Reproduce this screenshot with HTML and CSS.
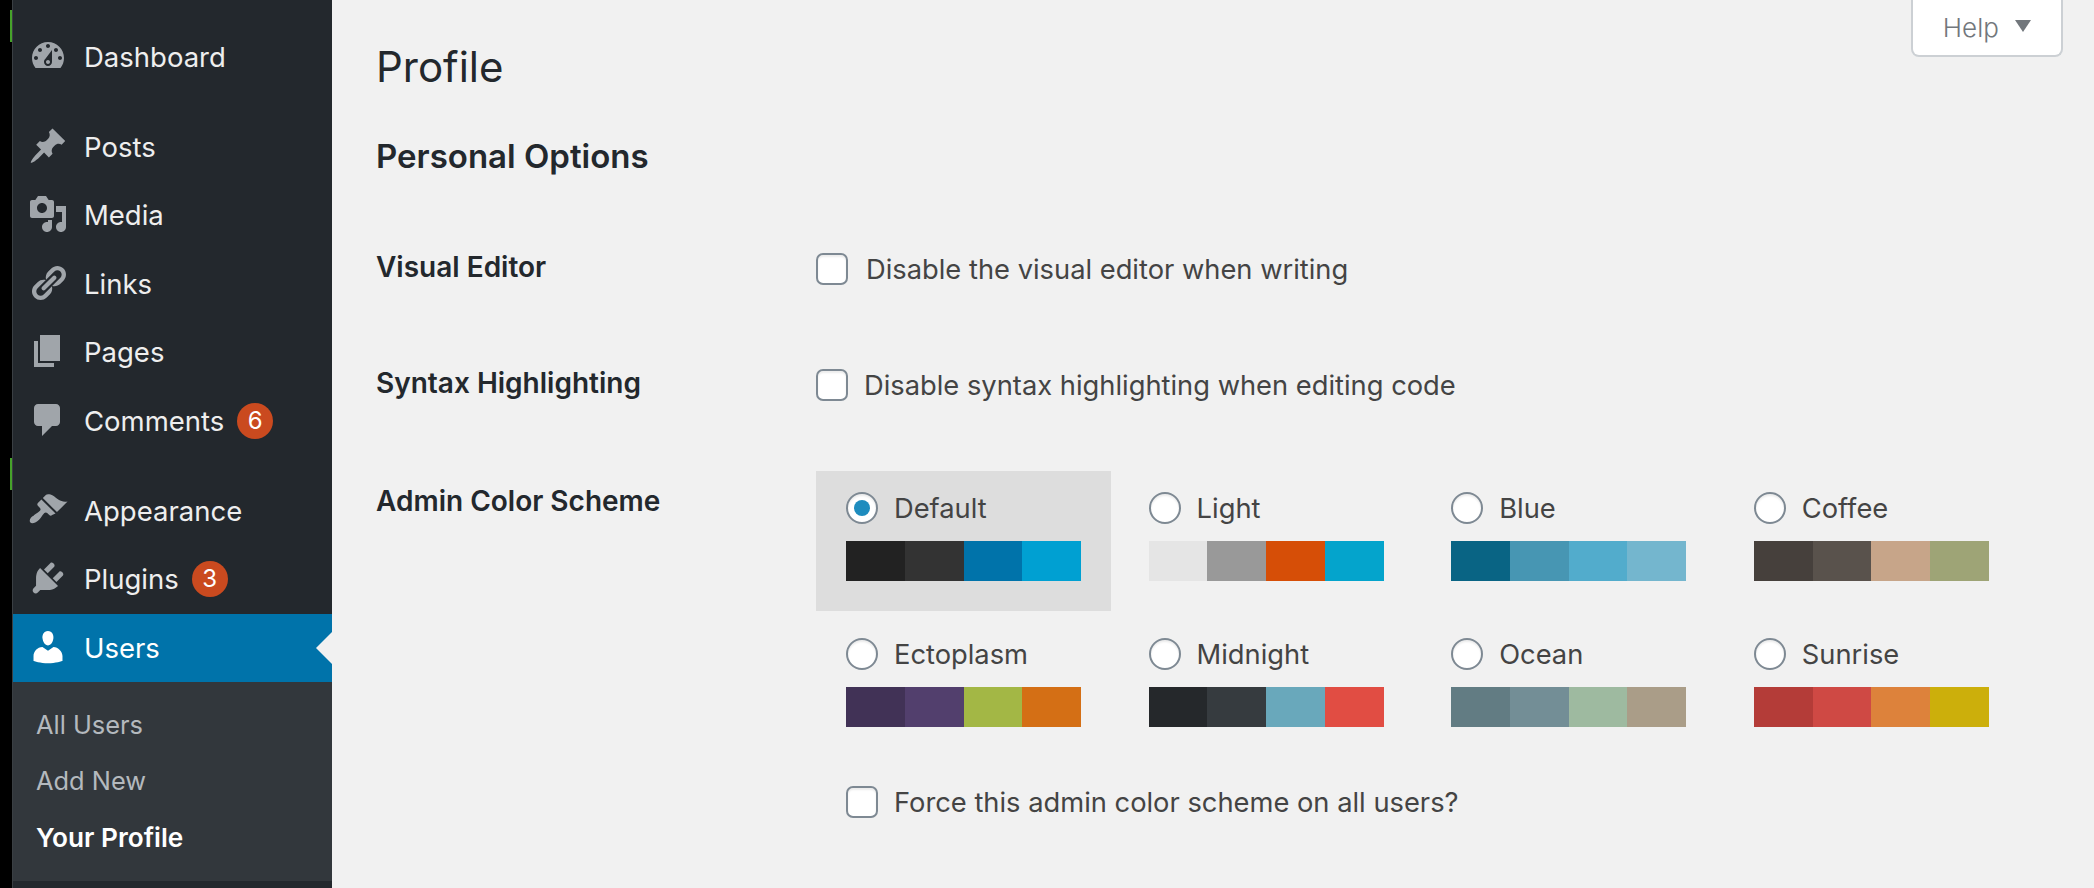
FILE: index.html
```html
<!DOCTYPE html>
<html lang="en">
<head>
    <meta charset="UTF-8">
    <title>Profile</title>
    <link rel="stylesheet" href="styles.css">
</head>
<body>
    <div class="edge">
        <span class="edge-mark edge-mark-top"></span>
        <span class="edge-mark edge-mark-mid"></span>
    </div>

    <nav class="sidebar">
        <ul class="menu menu-first">
            <li class="menu-item">
                <svg class="menu-icon" viewBox="0 0 20 20"><path d="M3.76 16h12.48c1.1-1.37 1.76-3.11 1.76-5 0-4.42-3.58-8-8-8s-8 3.58-8 8c0 1.89.66 3.63 1.76 5zM10 4c.55 0 1 .45 1 1s-.45 1-1 1-1-.45-1-1 .45-1 1-1zM6 6c.55 0 1 .45 1 1s-.45 1-1 1-1-.45-1-1 .45-1 1-1zm8 0c.55 0 1 .45 1 1s-.45 1-1 1-1-.45-1-1 .45-1 1-1zm-5.37 5.55L12 7v6c0 1.1-.9 2-2 2s-2-.9-2-2c0-.57.24-1.08.63-1.45zM4 10c.55 0 1 .45 1 1s-.45 1-1 1-1-.45-1-1 .45-1 1-1zm12 0c.55 0 1 .45 1 1s-.45 1-1 1-1-.45-1-1 .45-1 1-1zm-5 3c0-.55-.45-1-1-1s-1 .45-1 1 .45 1 1 1 1-.45 1-1z"/></svg>
                Dashboard
            </li>
        </ul>
        <ul class="menu">
            <li class="menu-item">
                <svg class="menu-icon" viewBox="0 0 20 20"><path d="M10.44 3.02l1.82-1.82 6.36 6.35-1.83 1.82c-1.05-.68-2.48-.57-3.41.36l-.75.75c-.92.93-1.04 2.35-.35 3.41l-1.83 1.82-2.41-2.41-2.8 2.79c-.42.42-3.38 2.71-3.8 2.29s1.86-3.39 2.28-3.81l2.79-2.79L4.1 9.36l1.83-1.82c1.05.69 2.48.57 3.4-.36l.75-.75c.93-.92 1.05-2.35.36-3.41z"/></svg>
                Posts
            </li>
            <li class="menu-item">
                <svg class="menu-icon" viewBox="0 0 20 20"><path d="M13 11V4c0-.55-.45-1-1-1h-1.67L9 1H5L3.67 3H2c-.55 0-1 .45-1 1v7c0 .55.45 1 1 1h10c.55 0 1-.45 1-1zM7 4.5c1.38 0 2.5 1.12 2.5 2.5S8.38 9.5 7 9.5 4.5 8.38 4.5 7 5.62 4.5 7 4.5zM14 6h5v10.5c0 1.38-1.12 2.5-2.5 2.5S14 17.88 14 16.5s1.12-2.5 2.5-2.5c.17 0 .34.02.5.05V9h-3V6zm-4 8.05V13h2v3.5c0 1.38-1.12 2.5-2.5 2.5S7 17.88 7 16.5 8.12 14 9.5 14c.17 0 .34.02.5.05z"/></svg>
                Media
            </li>
            <li class="menu-item">
                <svg class="menu-icon" viewBox="0 0 20 20"><path d="M17.74 2.76c1.68 1.69 1.68 4.41 0 6.1l-1.53 1.52c-1.12 1.12-2.7 1.47-4.14 1.09l2.62-2.61.76-.77.76-.76c.84-.84.84-2.2 0-3.04-.84-.85-2.2-.85-3.04 0l-.77.76-3.38 3.38c-.37-1.44-.02-3.02 1.1-4.14l1.52-1.53c1.69-1.68 4.42-1.68 6.1 0zM8.59 13.43l5.34-5.34c.42-.42.42-1.1 0-1.52-.44-.43-1.13-.39-1.53 0l-5.33 5.34c-.42.42-.42 1.1 0 1.52.44.43 1.13.39 1.52 0zm-.76 2.29l4.14-4.15c.38 1.44.03 3.02-1.09 4.14l-1.52 1.53c-1.69 1.68-4.41 1.68-6.1 0-1.68-1.68-1.68-4.42 0-6.1l1.53-1.52c1.12-1.12 2.7-1.47 4.14-1.1l-4.14 4.15c-.85.84-.85 2.2 0 3.05.84.84 2.2.84 3.04 0z"/></svg>
                Links
            </li>
            <li class="menu-item">
                <svg class="menu-icon" viewBox="0 0 20 20"><path d="M6 15V2h10v13H6zm-1 1h8v2H3V5h2v11z"/></svg>
                Pages
            </li>
            <li class="menu-item">
                <svg class="menu-icon" viewBox="0 0 20 20"><path d="M5 2h9c1.1 0 2 .9 2 2v7c0 1.1-.9 2-2 2h-2l-5 5v-5H5c-1.1 0-2-.9-2-2V4c0-1.1.9-2 2-2z"/></svg>
                Comments
                <span class="count">6</span>
            </li>
        </ul>
        <ul class="menu">
            <li class="menu-item">
                <svg class="menu-icon" viewBox="0 0 20 20"><path d="M14.48 11.06L7.41 3.99l1.5-1.5c.5-.56 2.3-.47 3.51.32 1.21.8 1.43 1.28 2.91 2.1 1.18.64 2.45 1.26 4.45.85zm-.71.71L6.7 4.7 4.93 6.47c-.39.39-.39 1.02 0 1.41l1.06 1.06c.39.39.39 1.03 0 1.42-.6.6-1.43 1.11-2.21 1.69-.35.26-.7.53-1.01.84C1.43 13.23.28 15.38 1.2 16.3c.92.91 3.11-.25 4.45-1.59.31-.31.58-.66.84-1.01.58-.78 1.09-1.61 1.69-2.21.39-.39 1.02-.39 1.41 0l1.06 1.06c.39.39 1.02.39 1.41 0z"/></svg>
                Appearance
            </li>
            <li class="menu-item">
                <svg class="menu-icon" viewBox="0 0 20 20"><path d="M13.11 4.36L9.87 7.6 8 5.73l3.24-3.24c.35-.34 1.05-.2 1.56.32.52.51.66 1.21.31 1.55zm-8 1.77l.91-1.12 9.01 9.01-1.19.84c-.71.71-2.63 1.16-3.82 1.16H6.14L4.9 17.26c-.59.59-1.54.59-2.12 0-.59-.58-.59-1.53 0-2.12l1.24-1.24v-3.88c0-1.13.4-3.19 1.09-3.89zm7.26 3.97l3.24-3.24c.34-.35 1.04-.21 1.55.31.52.51.66 1.21.31 1.55l-3.24 3.25z"/></svg>
                Plugins
                <span class="count">3</span>
            </li>
            <li class="menu-item menu-item-current">
                <svg class="menu-icon" viewBox="0 0 20 20"><path d="M10 9.25c-2.27 0-2.73-3.44-2.73-3.44C7 4.02 7.82 2 9.97 2c2.16 0 2.98 2.02 2.71 3.81 0 0-.41 3.44-2.68 3.44zm0 2.57L12.72 10c2.39 0 4.52 2.33 4.52 4.53v2.49s-3.65 1.13-7.24 1.13c-3.65 0-7.24-1.13-7.24-1.13v-2.49c0-2.25 1.94-4.48 4.47-4.48z"/></svg>
                Users
            </li>
        </ul>
        <ul class="submenu">
            <li>All Users</li>
            <li>Add New</li>
            <li class="submenu-current">Your Profile</li>
        </ul>
    </nav>

    <main class="content">
        <button class="help-tab" type="button">Help <span class="help-arrow"></span></button>

        <h1>Profile</h1>
        <h2>Personal Options</h2>

        <div class="form-row form-row-check">
            <div class="row-label">Visual Editor</div>
            <label class="check"><input type="checkbox"> <span class="check-text">Disable the visual editor when writing</span></label>
        </div>

        <div class="form-row form-row-check">
            <div class="row-label">Syntax Highlighting</div>
            <label class="check check-tight"><input type="checkbox"> <span class="check-text">Disable syntax highlighting when editing code</span></label>
        </div>

        <div class="form-row">
            <div class="row-label row-label-scheme">Admin Color Scheme</div>
            <div class="schemes">
                <div class="scheme-grid">
                    <label class="scheme scheme-selected">
                        <span class="scheme-name"><input type="radio" name="scheme" checked> Default</span>
                        <span class="swatches"><i class="c-222"></i><i class="c-333"></i><i class="c-0073aa"></i><i class="c-00a0d2"></i></span>
                    </label>
                    <label class="scheme">
                        <span class="scheme-name"><input type="radio" name="scheme"> Light</span>
                        <span class="swatches"><i class="c-e5e5e5"></i><i class="c-999"></i><i class="c-d64e07"></i><i class="c-04a4cc"></i></span>
                    </label>
                    <label class="scheme">
                        <span class="scheme-name"><input type="radio" name="scheme"> Blue</span>
                        <span class="swatches"><i class="c-096484"></i><i class="c-4796b3"></i><i class="c-52accc"></i><i class="c-74b6ce"></i></span>
                    </label>
                    <label class="scheme">
                        <span class="scheme-name"><input type="radio" name="scheme"> Coffee</span>
                        <span class="swatches"><i class="c-46403c"></i><i class="c-59524c"></i><i class="c-c7a589"></i><i class="c-9ea476"></i></span>
                    </label>
                    <label class="scheme">
                        <span class="scheme-name"><input type="radio" name="scheme"> Ectoplasm</span>
                        <span class="swatches"><i class="c-413256"></i><i class="c-523f6d"></i><i class="c-a3b745"></i><i class="c-d46f15"></i></span>
                    </label>
                    <label class="scheme">
                        <span class="scheme-name"><input type="radio" name="scheme"> Midnight</span>
                        <span class="swatches"><i class="c-25282b"></i><i class="c-363b3f"></i><i class="c-69a8bb"></i><i class="c-e14d43"></i></span>
                    </label>
                    <label class="scheme">
                        <span class="scheme-name"><input type="radio" name="scheme"> Ocean</span>
                        <span class="swatches"><i class="c-627c83"></i><i class="c-738e96"></i><i class="c-9ebaa0"></i><i class="c-aa9d88"></i></span>
                    </label>
                    <label class="scheme">
                        <span class="scheme-name"><input type="radio" name="scheme"> Sunrise</span>
                        <span class="swatches"><i class="c-b43c38"></i><i class="c-cf4944"></i><i class="c-dd823b"></i><i class="c-ccaf0b"></i></span>
                    </label>
                </div>
                <label class="force"><input type="checkbox"> Force this admin color scheme on all users?</label>
            </div>
        </div>
    </main>
</body>
</html>
```

FILE: styles.css
```css
* {
    box-sizing: border-box;
}
html, body {
    height: 888px;
    overflow: hidden;
}
body {
    margin: 0;
    display: flex;
    background-color: #f1f1f1;
    color: #444;
    font-family: Inter, "Noto Sans", sans-serif;
    font-size: 27.3px;
}
ul {
    list-style: none;
    margin: 0;
    padding: 0;
}

/* black strip on the left with the green marks */
.edge {
    flex: 0 0 12px;
    background-color: #000;
    display: flex;
    flex-direction: column;
    align-items: flex-end;
    padding-top: 10px;
}
.edge-mark {
    width: 2px;
    height: 32px;
    background-color: #46a32a;
}
.edge-mark-mid {
    margin-top: 416px;
}

/* sidebar */
.sidebar {
    flex: 0 0 320px;
    background-color: #23282d;
    border-left: 1px solid #3a3f43;
    padding-top: 22.4px;
}
.menu {
    margin-bottom: 22px;
}
.menu:nth-child(3) {
    margin-bottom: 0;
}
.menu-item {
    position: relative;
    display: flex;
    align-items: center;
    height: 68.4px;
    padding-left: 15px;
    color: #eee;
    font-size: 27.5px;
}
.menu-icon {
    width: 40px;
    height: 40px;
    margin-right: 16px;
    fill: #a0a5aa;
    position: relative;
    top: -1px;
}
.menu-item-current {
    background-color: #0073aa;
    color: #fff;
}
.menu-item-current .menu-icon {
    fill: #fff;
}
.menu-item-current::after {
    content: "";
    position: absolute;
    right: 0;
    top: 18px;
    border: 16px solid transparent;
    border-left: 0;
    border-right-color: #f1f1f1;
}
.count {
    width: 36px;
    height: 36px;
    margin-left: 13px;
    border-radius: 50%;
    background-color: #ca4a1f;
    color: #fff;
    font-size: 24px;
    line-height: 36px;
    text-align: center;
}
.submenu {
    background-color: #32373c;
    padding: 15px 0;
    height: 199px;
}
.submenu li {
    height: 56.4px;
    line-height: 56px;
    padding-left: 23px;
    color: #b4b9be;
    font-size: 25.4px;
}
.submenu .submenu-current {
    color: #fff;
    font-size: 26.2px;
    font-weight: 600;
}

/* main column */
.content {
    flex: 1;
    padding: 0 31px 0 44px;
}
.help-tab {
    float: right;
    width: 152px;
    height: 57px;
    padding: 0;
    border: 2px solid #ccd0d4;
    border-top: 0;
    border-radius: 0 0 8px 8px;
    background-color: #fff;
    color: #72777c;
    font-family: inherit;
    font-size: 26px;
    font-weight: 300;
}
.help-arrow {
    display: inline-block;
    margin-left: 9px;
    border: 8px solid transparent;
    border-top: 12px solid #72777c;
    border-bottom: 0;
    vertical-align: 5px;
}
h1 {
    margin: 0;
    padding-top: 40px;
    height: 115px;
    color: #23282d;
    font-size: 42px;
    font-weight: 400;
    line-height: 54px;
}
h2 {
    margin: 0;
    height: 138px;
    padding-top: 21px;
    color: #23282d;
    font-size: 33px;
    font-weight: 600;
    line-height: 40px;
}
.form-row {
    display: flex;
}
.form-row-check {
    height: 116px;
}
.row-label {
    flex: 0 0 440px;
    height: 32px;
    line-height: 28px;
    color: #23282d;
    font-size: 28px;
    font-weight: 600;
}
.row-label-scheme {
    margin-top: 2px;
}
.check {
    display: flex;
    align-items: center;
    height: 32px;
    gap: 18px;
}
.check-tight {
    gap: 16px;
}
input {
    appearance: none;
    margin: 0;
    flex: none;
    width: 32px;
    height: 32px;
    border: 2px solid #7e8993;
    background-color: #fff;
    box-shadow: inset 0 2px 2px rgba(0, 0, 0, 0.08);
}
input[type="checkbox"] {
    border-radius: 7px;
}
input[type="radio"] {
    border-radius: 50%;
    display: grid;
    place-items: center;
}
input[type="radio"]:checked::before {
    content: "";
    width: 16px;
    height: 16px;
    border-radius: 50%;
    background-color: #1e8cbe;
}

/* colour schemes */
.scheme-grid {
    display: grid;
    grid-template-columns: repeat(4, 295px);
    grid-auto-rows: 140px;
    gap: 6px 7.6px;
    margin-top: -14px;
}
.scheme {
    display: block;
    padding: 21px 30px 0;
}
.scheme-selected {
    background-color: #ddd;
}
.scheme-name {
    display: flex;
    align-items: center;
    height: 32px;
    gap: 16px;
    margin-bottom: 17px;
}
.swatches {
    display: flex;
    width: 235px;
    height: 40px;
}
.swatches i {
    flex: 1;
}
.force {
    display: flex;
    align-items: center;
    gap: 16px;
    height: 32px;
    margin-top: 29px;
    padding-left: 30px;
}

.c-222 { background-color: #222; }
.c-333 { background-color: #333; }
.c-0073aa { background-color: #0073aa; }
.c-00a0d2 { background-color: #00a0d2; }
.c-e5e5e5 { background-color: #e5e5e5; }
.c-999 { background-color: #999; }
.c-d64e07 { background-color: #d64e07; }
.c-04a4cc { background-color: #04a4cc; }
.c-096484 { background-color: #096484; }
.c-4796b3 { background-color: #4796b3; }
.c-52accc { background-color: #52accc; }
.c-74b6ce { background-color: #74b6ce; }
.c-46403c { background-color: #46403c; }
.c-59524c { background-color: #59524c; }
.c-c7a589 { background-color: #c7a589; }
.c-9ea476 { background-color: #9ea476; }
.c-413256 { background-color: #413256; }
.c-523f6d { background-color: #523f6d; }
.c-a3b745 { background-color: #a3b745; }
.c-d46f15 { background-color: #d46f15; }
.c-25282b { background-color: #25282b; }
.c-363b3f { background-color: #363b3f; }
.c-69a8bb { background-color: #69a8bb; }
.c-e14d43 { background-color: #e14d43; }
.c-627c83 { background-color: #627c83; }
.c-738e96 { background-color: #738e96; }
.c-9ebaa0 { background-color: #9ebaa0; }
.c-aa9d88 { background-color: #aa9d88; }
.c-b43c38 { background-color: #b43c38; }
.c-cf4944 { background-color: #cf4944; }
.c-dd823b { background-color: #dd823b; }
.c-ccaf0b { background-color: #ccaf0b; }
```
